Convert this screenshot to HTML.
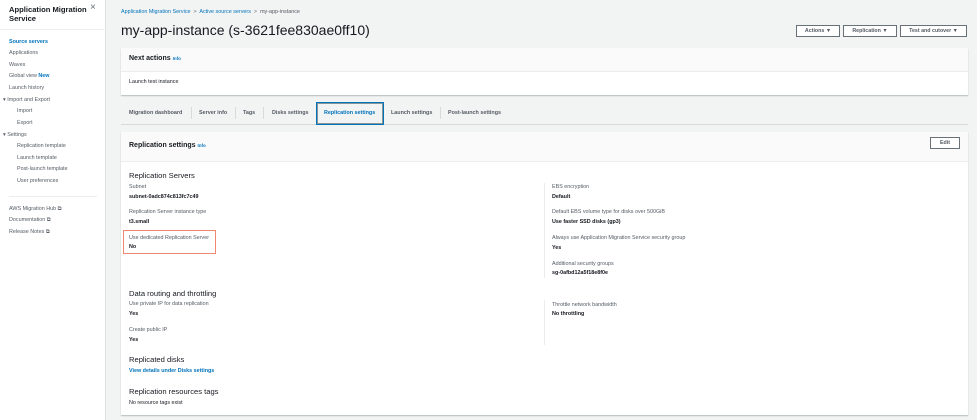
<!DOCTYPE html>
<html><head><style>
*{margin:0;padding:0;box-sizing:border-box}
body{width:977px;height:420px;overflow:hidden;background:#f2f3f3;font-family:"Liberation Sans",sans-serif;color:#16191f;position:relative}
.a{position:absolute;white-space:nowrap}
.s{font-size:5.4px}
.l{font-size:5.4px;color:#545b64}
.b{font-weight:bold}
.h{font-size:7.6px}
.lnk{color:#0073bb}
.side{position:absolute;left:0;top:0;width:106px;height:420px;background:#fff;border-right:1px solid #e0e0e0}
.card{position:absolute;background:#fff;box-shadow:0 1px 1px rgba(0,28,36,.25)}
.hd{background:#fafafa;border-bottom:1px solid #eaeded}
.btn{position:absolute;border:1px solid #687078;background:#fff;font-size:5.3px;font-weight:bold;color:#545b64;text-align:center;line-height:10px;height:12px}
.sep{position:absolute;width:1px;background:#d5dbdb}
</style></head><body>
<div class="side">
<div class="a b" style="left:9px;top:5px;font-size:7.6px;line-height:9px">Application Migration<br>Service</div>
<div class="a" style="left:90px;top:2px;font-size:10px;color:#687078">×</div>
<div style="position:absolute;left:0;top:29px;width:106px;border-top:1px solid #eaeded"></div>
<div class="a s b lnk" style="left:9px;top:39px">Source servers</div>
<div class="a s" style="left:9px;top:50px;color:#545b64">Applications</div>
<div class="a s" style="left:9px;top:62px;color:#545b64">Waves</div>
<div class="a s" style="left:9px;top:73px;color:#545b64">Global view <span class="b lnk">New</span></div>
<div class="a s" style="left:9px;top:85px;color:#545b64">Launch history</div>
<div class="a s" style="left:3px;top:97px;color:#545b64">▾ Import and Export</div>
<div class="a s" style="left:17px;top:108px;color:#545b64">Import</div>
<div class="a s" style="left:17px;top:120px;color:#545b64">Export</div>
<div class="a s" style="left:3px;top:132px;color:#545b64">▾ Settings</div>
<div class="a s" style="left:17px;top:143px;color:#545b64">Replication template</div>
<div class="a s" style="left:17px;top:155px;color:#545b64">Launch template</div>
<div class="a s" style="left:17px;top:166px;color:#545b64">Post-launch template</div>
<div class="a s" style="left:17px;top:178px;color:#545b64">User preferences</div>
<div style="position:absolute;left:9px;top:196px;width:88px;border-top:1px solid #eaeded"></div>
<div class="a s" style="left:9px;top:206px;color:#545b64">AWS Migration Hub ⧉</div>
<div class="a s" style="left:9px;top:217px;color:#545b64">Documentation ⧉</div>
<div class="a s" style="left:9px;top:229px;color:#545b64">Release Notes ⧉</div>
</div>

<div class="a s" style="left:121px;top:9px"><span class="lnk">Application Migration Service</span> <span style="color:#687078">&nbsp;&gt;&nbsp;</span> <span class="lnk">Active source servers</span> <span style="color:#687078">&nbsp;&gt;&nbsp;</span> <span style="color:#545b64">my-app-instance</span></div>
<div class="a" style="left:121px;top:22px;font-size:14px">my-app-instance (s-3621fee830ae0ff10)</div>
<div class="btn" style="left:796px;top:25px;width:44px">Actions ▼</div>
<div class="btn" style="left:843px;top:25px;width:54px">Replication ▼</div>
<div class="btn" style="left:900px;top:25px;width:67px">Test and cutover ▼</div>

<div class="card" style="left:121px;top:48px;width:847px;height:47px">
<div class="hd" style="height:24px"></div>
<div class="a b" style="left:8px;top:7px;font-size:7px">Next actions <span class="lnk" style="font-size:4.5px">Info</span></div>
<div class="a s" style="left:8px;top:31px">Launch test instance</div>
</div>

<div style="position:absolute;left:121px;top:124px;width:847px;border-top:1px solid #d5dbdb"></div>
<div class="a s b" style="left:129px;top:110px;color:#545b64">Migration dashboard</div>
<div class="sep" style="left:191px;top:107px;height:12px"></div>
<div class="a s b" style="left:199px;top:110px;color:#545b64">Server info</div>
<div class="sep" style="left:235px;top:107px;height:12px"></div>
<div class="a s b" style="left:243px;top:110px;color:#545b64">Tags</div>
<div class="sep" style="left:263px;top:107px;height:12px"></div>
<div class="a s b" style="left:272px;top:110px;color:#545b64">Disks settings</div>
<div style="position:absolute;left:316px;top:102px;width:68px;height:23px;border:1px solid #0073bb;background:#f2f3f3;box-shadow:inset 0 0 0 1px #879596"></div>
<div class="a s b lnk" style="left:324px;top:110px">Replication settings</div>
<div class="a s b" style="left:391px;top:110px;color:#545b64">Launch settings</div>
<div class="sep" style="left:440px;top:107px;height:12px"></div>
<div class="a s b" style="left:448px;top:110px;color:#545b64">Post-launch settings</div>

<div class="card" style="left:121px;top:132px;width:847px;height:283px">
<div class="hd" style="height:30px"></div>
<div class="a b" style="left:8px;top:10px;font-size:7px">Replication settings <span class="lnk" style="font-size:4.5px">Info</span></div>
<div class="btn" style="left:809px;top:5px;width:30px;height:12px">Edit</div>
</div>

<div class="a h" style="left:129px;top:171px">Replication Servers</div>
<div class="a l" style="left:129px;top:184px">Subnet</div>
<div class="a s b" style="left:129px;top:194px">subnet-0adc874c813fc7c49</div>
<div class="a l" style="left:129px;top:209px">Replication Server instance type</div>
<div class="a s b" style="left:129px;top:219px">t3.small</div>
<div style="position:absolute;left:123px;top:230px;width:93px;height:24px;border:1.5px solid #f0876f"></div>
<div class="a l" style="left:129px;top:235px">Use dedicated Replication Server</div>
<div class="a s b" style="left:129px;top:244px">No</div>

<div class="sep" style="left:544px;top:183px;height:95px;background:#eaeded"></div>
<div class="a l" style="left:552px;top:184px">EBS encryption</div>
<div class="a s b" style="left:552px;top:194px">Default</div>
<div class="a l" style="left:552px;top:209px">Default EBS volume type for disks over 500GiB</div>
<div class="a s b" style="left:552px;top:219px">Use faster SSD disks (gp3)</div>
<div class="a l" style="left:552px;top:235px">Always use Application Migration Service security group</div>
<div class="a s b" style="left:552px;top:245px">Yes</div>
<div class="a l" style="left:552px;top:261px">Additional security groups</div>
<div class="a s b" style="left:552px;top:270px">sg-0afbd12a5f18e8f0e</div>

<div class="a h" style="left:129px;top:289px">Data routing and throttling</div>
<div class="a l" style="left:129px;top:301px">Use private IP for data replication</div>
<div class="a s b" style="left:129px;top:311px">Yes</div>
<div class="a l" style="left:129px;top:327px">Create public IP</div>
<div class="a s b" style="left:129px;top:337px">Yes</div>
<div class="sep" style="left:544px;top:300px;height:45px;background:#eaeded"></div>
<div class="a l" style="left:552px;top:302px">Throttle network bandwidth</div>
<div class="a s b" style="left:552px;top:311px">No throttling</div>

<div class="a h" style="left:129px;top:355px">Replicated disks</div>
<div class="a s b lnk" style="left:129px;top:368px">View details under Disks settings</div>
<div class="a h" style="left:129px;top:387px">Replication resources tags</div>
<div class="a s" style="left:129px;top:400px">No resource tags exist</div>
</body></html>
